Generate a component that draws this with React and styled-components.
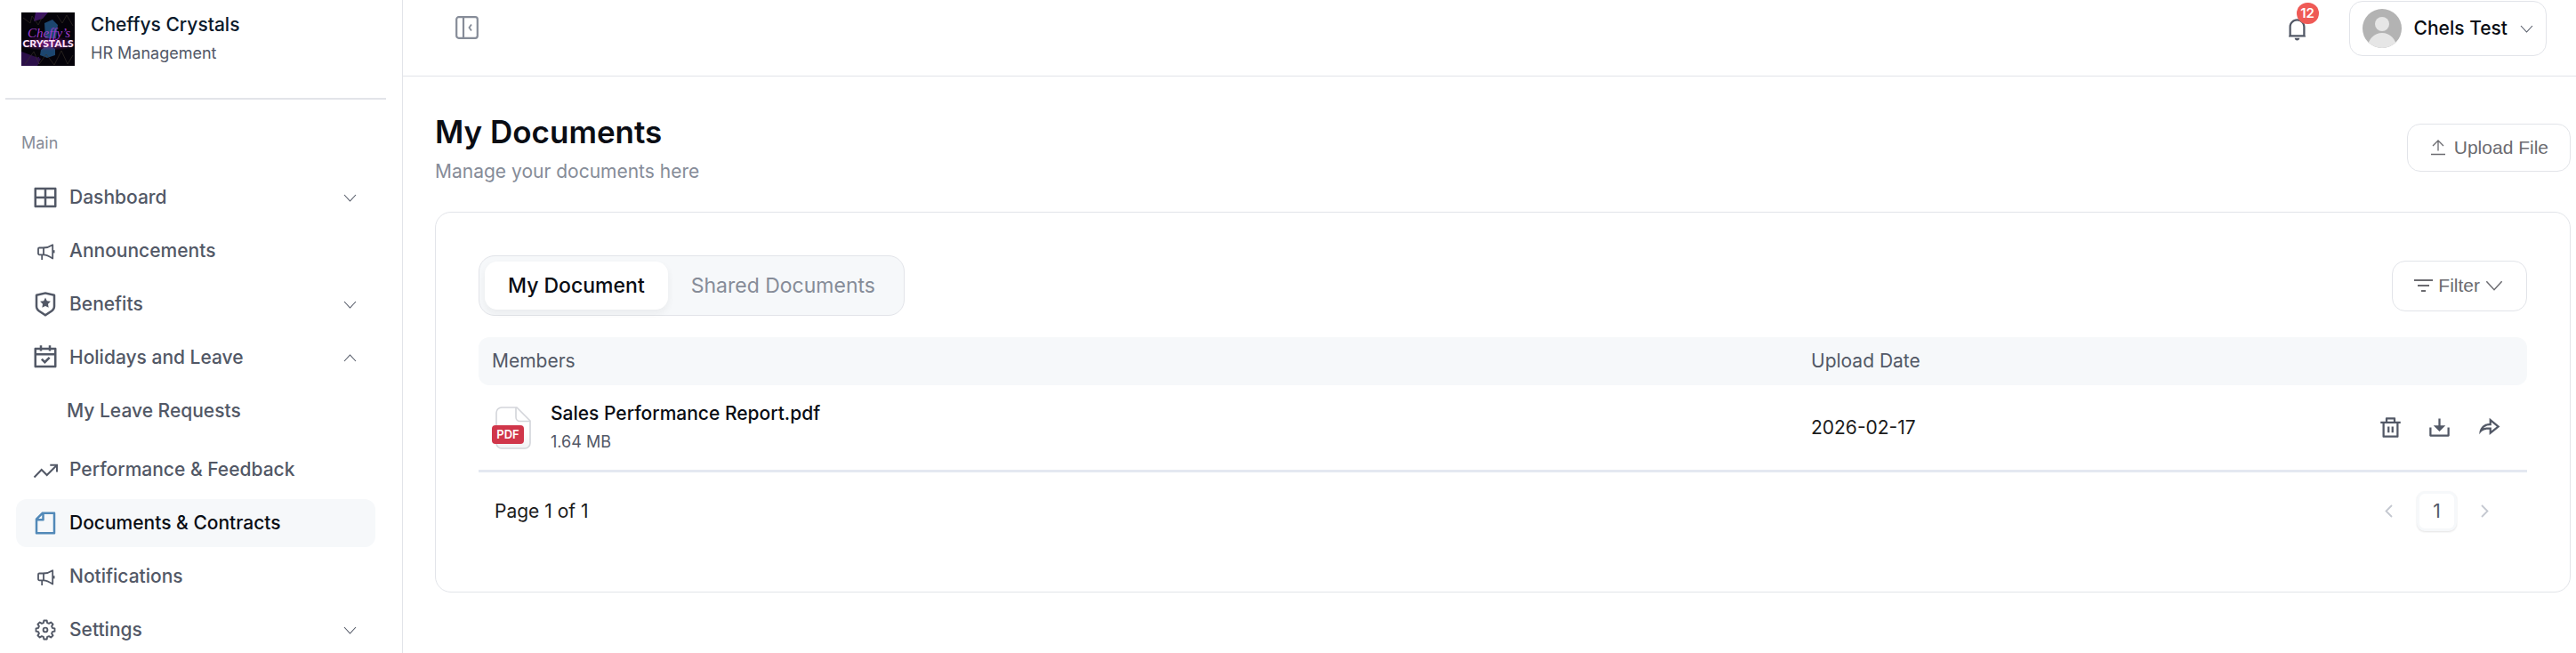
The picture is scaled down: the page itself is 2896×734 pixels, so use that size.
import React, { useState } from 'react';
import styled, { createGlobalStyle } from 'styled-components';
import {
    RiLayoutGridLine,
    RiShieldStarLine,
    RiCalendarCheckLine,
    RiFileLine,
    RiDeleteBinLine,
    RiDownload2Line,
    RiShareForwardLine,
    RiNotification4Line
} from 'react-icons/ri';

const GlobalStyle = createGlobalStyle`
  *, *::before, *::after {
    box-sizing: border-box;
  }

  body {
    margin: 0;
    background: #fff;
    color: #0a0d14;
    font-family: Inter, sans-serif;
    font-size: 21px;
    line-height: 30px;
  }

  h1, p {
    margin: 0;
  }

  button {
    font: inherit;
    color: inherit;
    cursor: pointer;
  }

  svg {
    display: block;
    flex: none;
  }
`;

const MegaphoneIcon = () => (
    <svg width="30" height="30" viewBox="0 0 30 30" fill="none" stroke="currentColor" strokeWidth="1.8" strokeLinejoin="round">
        <path d="M13 11.500H8.200A1.200 1.200 0 0 0 7 12.700v5.400a1.200 1.200 0 0 0 1.200 1.200H13z" />
        <path d="M13 11.500c3.800 0 7.200-1.200 10.200-3.200v15.200c-3-2-6.400-4.200-10.200-4.200M11.200 19.300V25" />
        <path d="M24.600 14.200v3.200" />
    </svg>
);

const TrendIcon = () => (
    <svg width="30" height="30" viewBox="0 0 30 30" fill="none" stroke="currentColor" strokeWidth="2">
        <path d="M2.500 23.500l8.200-8.500 6 6L27.500 10.200" />
        <path d="M20.300 9.800h7.700v7.700" />
    </svg>
);

// eight teeth, each drawn as an outer edge followed by a notch
const gearPoints = Array.from({ length: 8 }, (_, i) => i * 45)
    .flatMap((a) => [[a - 9, 10.6], [a + 9, 10.6], [a + 15, 8.2], [a + 30, 8.2]])
    .map(([a, r]) => {
        const rad = (a * Math.PI) / 180;
        return `${(15 + r * Math.cos(rad)).toFixed(2)},${(15 + r * Math.sin(rad)).toFixed(2)}`;
    })
    .join(' ');

const GearIcon = () => (
    <svg width="30" height="30" viewBox="0 0 30 30" fill="none" stroke="currentColor" strokeWidth="1.9" strokeLinejoin="round">
        <polygon points={gearPoints} />
        <circle cx="15" cy="15" r="2.400" />
    </svg>
);

const Chevron = ({ size = 15, up, left, right }) => {
    let d = 'M1 4l6.500 7L14 4';
    if (up) d = 'M1 11l6.500-7L14 11';
    if (left) d = 'M11 1L4.500 7.500 11 14';
    if (right) d = 'M4 1l6.500 6.500L4 14';
    return (
        <svg width={size} height={size} viewBox="0 0 15 15" fill="none" stroke="currentColor" strokeWidth={left || right ? 1.8 : 1.1}>
            <path d={d} />
        </svg>
    );
};

const CollapseIcon = () => (
    <svg width="26" height="26" viewBox="0 0 26 26" fill="none" stroke="currentColor" strokeWidth="2.200">
        <rect x="1.200" y="1.200" width="23.600" height="23.600" rx="2.500" />
        <path d="M9 1.500v23" />
        <path d="M18 9.500L15.500 13l2.500 3.500" strokeWidth="1.800" />
    </svg>
);

const UploadIcon = () => (
    <svg width="16" height="18" viewBox="0 0 16 18" fill="none" stroke="currentColor" strokeWidth="1.300">
        <path d="M0 16.500h16M8 12.500v-11M2 7l6-6 6 6" />
    </svg>
);

const FilterIcon = () => (
    <svg width="21" height="16" viewBox="0 0 21 16" fill="none" stroke="currentColor" strokeWidth="2">
        <path d="M0 2h21M4 8h13M8 14h5" />
    </svg>
);

const PdfIcon = () => (
    <svg width="45" height="48" viewBox="0 0 45 48">
        <defs>
            <linearGradient id="sheet" x1="0" y1="0" x2="0" y2="1">
                <stop offset="0.6" stopColor="#fff" />
                <stop offset="1" stopColor="#f1f2f4" />
            </linearGradient>
        </defs>
        <path d="M11 1h17l15 15v25a6 6 0 0 1-6 6H11a6 6 0 0 1-6-6V7a6 6 0 0 1 6-6z" fill="url(#sheet)" stroke="#d3d5da" strokeWidth="1.600" />
        <path d="M27 1v11a4.500 4.500 0 0 0 4.500 4.500H43" fill="none" stroke="#d3d5da" strokeWidth="1.600" />
        <rect x="0" y="21" width="36" height="21" rx="4" fill="#d0364a" />
        <text x="18" y="36" textAnchor="middle" fontFamily="Inter, sans-serif" fontSize="13" fontWeight="600" fill="#fff">PDF</text>
    </svg>
);

const AvatarIcon = () => (
    <svg width="44" height="44" viewBox="0 0 44 44">
        <defs>
            <clipPath id="face"><circle cx="22" cy="22" r="22" /></clipPath>
        </defs>
        <g clipPath="url(#face)">
            <rect width="44" height="44" fill="#b3b3b3" />
            <circle cx="22" cy="17" r="8" fill="#e6e6e6" />
            <ellipse cx="22" cy="43" rx="16" ry="16" fill="#e6e6e6" />
        </g>
    </svg>
);

const CompanyLogo = () => (
    <svg width="60" height="60" viewBox="0 0 60 60" role="img" aria-label="Cheffys Crystals logo">
        <defs>
            <radialGradient id="glow">
                <stop offset="0" stopColor="#7a1d86" />
                <stop offset="1" stopColor="#7a1d86" stopOpacity="0" />
            </radialGradient>
        </defs>
        <rect width="60" height="60" fill="#05030a" />
        <path d="M16 0h14l-6 7-10 3zM10 54l10-4v8H8z" fill="#3d1463" />
        <path d="M0 44l22 8-4 8H0z" fill="#2b0f49" />
        <path d="M26 12l9-4 6 6-2 15H27zM22 42l8-6 8 5v7l-9 3-8-3z" fill="#1c466f" />
        <path d="M2 6l8 6 2-8 7 10 6-12M40 3l6 9 5-9 7 12M4 58l10-14 6 14 8-11 9 12 8-16 7 15 6-10" fill="none" stroke="#3b342a" strokeWidth="0.600" />
        <ellipse cx="30" cy="35" rx="34" ry="8" fill="url(#glow)" />
        <text x="31" y="28" textAnchor="middle" fontFamily="'Liberation Serif', serif" fontStyle="italic" fontSize="15" fill="#a03bd0">Cheffy’s</text>
        <text x="30" y="39" textAnchor="middle" fontFamily="Lato, sans-serif" fontWeight="900" fontSize="12" fill="#ffe3fa">CRYSTALS</text>
    </svg>
);

const navItems = [
    { label: 'Dashboard', icon: <RiLayoutGridLine size={30} />, expandable: true },
    { label: 'Announcements', icon: <MegaphoneIcon /> },
    { label: 'Benefits', icon: <RiShieldStarLine size={30} />, expandable: true },
    { label: 'Holidays and Leave', icon: <RiCalendarCheckLine size={30} />, expandable: true, children: ['My Leave Requests'] },
    { label: 'Performance & Feedback', icon: <TrendIcon /> },
    { label: 'Documents & Contracts', icon: <RiFileLine size={30} />, active: true },
    { label: 'Notifications', icon: <MegaphoneIcon /> },
    { label: 'Settings', icon: <GearIcon />, expandable: true }
];

const documents = [
    { name: 'Sales Performance Report.pdf', size: '1.64 MB', date: '2026-02-17' }
];

const Sidebar = () => {
    const [open, setOpen] = useState('Holidays and Leave');

    return (
        <SidebarWrapper>
            <Company>
                <CompanyLogo />
                <div>
                    <CompanyName>Cheffys Crystals</CompanyName>
                    <SmallText>HR Management</SmallText>
                </div>
            </Company>
            <SectionLabel>Main</SectionLabel>
            <NavList>
                {navItems.map((item) => {
                    const isOpen = open === item.label;
                    return (
                        <li key={item.label}>
                            {item.expandable ? (
                                <NavButton aria-expanded={isOpen} onClick={() => setOpen(isOpen ? null : item.label)}>
                                    {item.icon}
                                    <span>{item.label}</span>
                                    <Chevron up={isOpen} />
                                </NavButton>
                            ) : (
                                <NavLink href="#" $active={item.active}>
                                    {item.icon}
                                    <span>{item.label}</span>
                                </NavLink>
                            )}
                            {isOpen && item.children && (
                                <SubList>
                                    {item.children.map((child) => (
                                        <li key={child}><SubLink href="#">{child}</SubLink></li>
                                    ))}
                                </SubList>
                            )}
                        </li>
                    );
                })}
            </NavList>
        </SidebarWrapper>
    );
};

const Header = () => (
    <HeaderWrapper>
        <IconButton aria-label="Collapse sidebar" $light>
            <CollapseIcon />
        </IconButton>
        <HeaderRight>
            <BellButton aria-label="Notifications">
                <RiNotification4Line size={27} />
                <Badge>12</Badge>
            </BellButton>
            <ProfileButton>
                <AvatarIcon />
                <span>Chels Test</span>
                <Chevron />
            </ProfileButton>
        </HeaderRight>
    </HeaderWrapper>
);

const DocumentsTable = () => (
    <Table>
        <thead>
            <tr>
                <th>Members</th>
                <th>Upload Date</th>
                <th aria-label="Actions" />
            </tr>
        </thead>
        <tbody>
            {documents.map((doc) => (
                <tr key={doc.name}>
                    <td>
                        <FileCell>
                            <PdfIcon />
                            <div>
                                <FileName>{doc.name}</FileName>
                                <SmallText>{doc.size}</SmallText>
                            </div>
                        </FileCell>
                    </td>
                    <td>{doc.date}</td>
                    <td>
                        <Actions>
                            <IconButton aria-label="Delete"><RiDeleteBinLine size={27} /></IconButton>
                            <IconButton aria-label="Download"><RiDownload2Line size={27} /></IconButton>
                            <IconButton aria-label="Share"><RiShareForwardLine size={27} /></IconButton>
                        </Actions>
                    </td>
                </tr>
            ))}
        </tbody>
    </Table>
);

const App = () => {
    const [tab, setTab] = useState('My Document');

    return (
        <Layout>
            <GlobalStyle />
            <Sidebar />
            <Main>
                <Header />
                <Content>
                    <TitleRow>
                        <div>
                            <Title>My Documents</Title>
                            <Subtitle>Manage your documents here</Subtitle>
                        </div>
                        <UploadButton>
                            <UploadIcon />
                            Upload File
                        </UploadButton>
                    </TitleRow>
                    <Card>
                        <Toolbar>
                            <Tabs role="tablist">
                                {['My Document', 'Shared Documents'].map((name) => (
                                    <Tab key={name} role="tab" aria-selected={tab === name} $active={tab === name} onClick={() => setTab(name)}>
                                        {name}
                                    </Tab>
                                ))}
                            </Tabs>
                            <FilterButton>
                                <FilterIcon />
                                Filter
                                <Chevron size={20} />
                            </FilterButton>
                        </Toolbar>
                        <DocumentsTable />
                        <Pagination>
                            <span>Page 1 of 1</span>
                            <Pager>
                                <PagerArrow aria-label="Previous page" disabled><Chevron left /></PagerArrow>
                                <PageNumber>1</PageNumber>
                                <PagerArrow aria-label="Next page" disabled><Chevron right /></PagerArrow>
                            </Pager>
                        </Pagination>
                    </Card>
                </Content>
            </Main>
        </Layout>
    );
};

const Layout = styled.div`
  display: flex;
  height: 100vh;
  overflow: hidden;
`;

const SidebarWrapper = styled.aside`
  flex: none;
  width: 453px;
  border-right: 1px solid #e2e4e9;
  overflow-y: auto;
  scrollbar-width: none;
`;

const Company = styled.div`
  display: flex;
  align-items: center;
  gap: 18px;
  margin: 0 18px 0 6px;
  padding: 12px 18px 34px;
  border-bottom: 2px solid #e2e4e9;
`;

const CompanyName = styled.p`
  color: #0b1a2b;
  font-weight: 500;
  line-height: 32px;
`;

const SmallText = styled.p`
  color: #525866;
  font-size: 18px;
  line-height: 32px;
`;

const SectionLabel = styled.p`
  padding: 34px 24px 19px;
  color: #868c98;
  font-size: 18px;
`;

const NavList = styled.ul`
  display: flex;
  flex-direction: column;
  gap: 6px;
  margin: 0;
  padding: 0 30px 0 18px;
  list-style: none;
`;

const NavLink = styled.a`
  display: flex;
  align-items: center;
  gap: 12px;
  width: 100%;
  height: 54px;
  padding: 0 21px 0 18px;
  border: none;
  border-radius: 12px;
  background: ${({ $active }) => ($active ? '#f6f8fa' : 'transparent')};
  color: ${({ $active }) => ($active ? '#0a0d14' : '#525866')};
  font-weight: 500;
  text-align: left;
  text-decoration: none;

  span {
    flex: 1;
  }

  svg:first-child {
    color: ${({ $active }) => ($active ? '#5289b8' : '#525866')};
  }
`;

const NavButton = styled(NavLink).attrs({ as: 'button' })``;

const SubList = styled.ul`
  margin: 0;
  padding: 6px 0;
  list-style: none;
`;

const SubLink = styled.a`
  display: flex;
  align-items: center;
  height: 54px;
  padding-left: 57px;
  color: #525866;
  font-weight: 500;
  text-decoration: none;
`;

const Main = styled.main`
  flex: 1;
  min-width: 0;
  overflow-y: auto;
`;

const HeaderWrapper = styled.header`
  display: flex;
  align-items: flex-start;
  justify-content: space-between;
  height: 86px;
  padding: 1px 33px 0 59px;
  border-bottom: 1px solid #e2e4e9;

  > button {
    margin-top: 17px;
  }
`;

const HeaderRight = styled.div`
  display: flex;
  align-items: center;
  gap: 45px;
`;

const IconButton = styled.button`
  display: flex;
  padding: 0;
  border: none;
  background: none;
  color: ${({ $light }) => ($light ? '#868c98' : '#525866')};
`;

const BellButton = styled(IconButton)`
  position: relative;
`;

const Badge = styled.span`
  position: absolute;
  top: -16px;
  left: 13px;
  width: 25px;
  height: 24px;
  border-radius: 12px;
  background: #ef5a56;
  color: #fff;
  font-size: 15px;
  font-weight: 600;
  line-height: 24px;
  text-align: center;
`;

const ProfileButton = styled.button`
  display: flex;
  align-items: center;
  gap: 14px;
  height: 62px;
  padding: 0 14px;
  border: 1px solid #e2e4e9;
  border-radius: 15px;
  background: #fff;
  font-weight: 500;

  svg:last-child {
    color: #525866;
  }
`;

const Content = styled.div`
  padding: 38px 6px 38px 36px;
`;

const TitleRow = styled.div`
  display: flex;
  align-items: center;
  justify-content: space-between;
  margin-bottom: 30px;
`;

const Title = styled.h1`
  font-size: 35px;
  font-weight: 600;
  line-height: 48px;
`;

const Subtitle = styled.p`
  padding-top: 6px;
  color: #868c98;
`;

const OutlineButton = styled.button`
  display: flex;
  align-items: center;
  border: 1px solid #e2e4e9;
  border-radius: 15px;
  background: #fff;
  color: #6b6b70;
  font-family: 'Liberation Sans', Arial, sans-serif;
`;

const UploadButton = styled(OutlineButton)`
  gap: 10px;
  height: 54px;
  padding: 0 24px 0 26px;
`;

const FilterButton = styled(OutlineButton)`
  gap: 6px;
  height: 57px;
  padding: 0 26px 0 24px;
`;

const Card = styled.section`
  padding: 48px 48px 68px;
  border: 1px solid #e2e4e9;
  border-radius: 18px;
`;

const Toolbar = styled.div`
  display: flex;
  align-items: center;
  justify-content: space-between;
  margin-bottom: 24px;
`;

const Tabs = styled.div`
  display: flex;
  padding: 6px;
  border: 1px solid #e2e4e9;
  border-radius: 18px;
  background: #f6f8fa;
`;

const Tab = styled.button`
  height: 54px;
  padding: 0 26px;
  border: none;
  border-radius: 14px;
  background: ${({ $active }) => ($active ? '#fff' : 'transparent')};
  box-shadow: ${({ $active }) => ($active ? '0 4px 8px rgba(27, 28, 29, 0.06)' : 'none')};
  color: ${({ $active }) => ($active ? '#0a0d14' : '#868c98')};
  font-size: 23px;
  font-weight: ${({ $active }) => ($active ? 500 : 400)};
`;

const Table = styled.table`
  width: 100%;
  border-spacing: 0;
  table-layout: fixed;
  color: #1c1c1c;

  th {
    height: 54px;
    padding: 0 15px;
    background: #f6f8fa;
    color: #525866;
    font-weight: 400;
    text-align: left;
  }

  th:first-child {
    border-radius: 12px 0 0 12px;
  }

  th:nth-child(2) {
    width: 560px;
  }

  th:last-child {
    width: 260px;
    border-radius: 0 12px 12px 0;
  }

  td {
    height: 98px;
    padding: 0 15px;
    border-bottom: 3px solid #e4e8f1;
  }
`;

const FileCell = styled.div`
  display: flex;
  align-items: center;
  gap: 21px;
`;

const FileName = styled.p`
  color: #0a0d14;
  font-weight: 500;
  line-height: 32px;
`;

const Actions = styled.div`
  display: flex;
  justify-content: flex-end;
  gap: 28px;
  padding-right: 15px;
`;

const Pagination = styled.nav`
  display: flex;
  align-items: center;
  justify-content: space-between;
  padding: 21px 40px 0 18px;
  color: #1c1c1c;
`;

const Pager = styled.div`
  display: flex;
  align-items: center;
  gap: 24px;
`;

const PagerArrow = styled.button`
  display: flex;
  padding: 0;
  border: none;
  background: none;
  color: #c4c8d0;
`;

const PageNumber = styled.button`
  width: 45px;
  height: 45px;
  padding: 0;
  border: 3px solid #f6f8fa;
  border-radius: 9px;
  background: #fff;
  box-shadow: 0 1px 2px rgba(27, 28, 29, 0.12);
  color: #525866;
`;

export default App;
